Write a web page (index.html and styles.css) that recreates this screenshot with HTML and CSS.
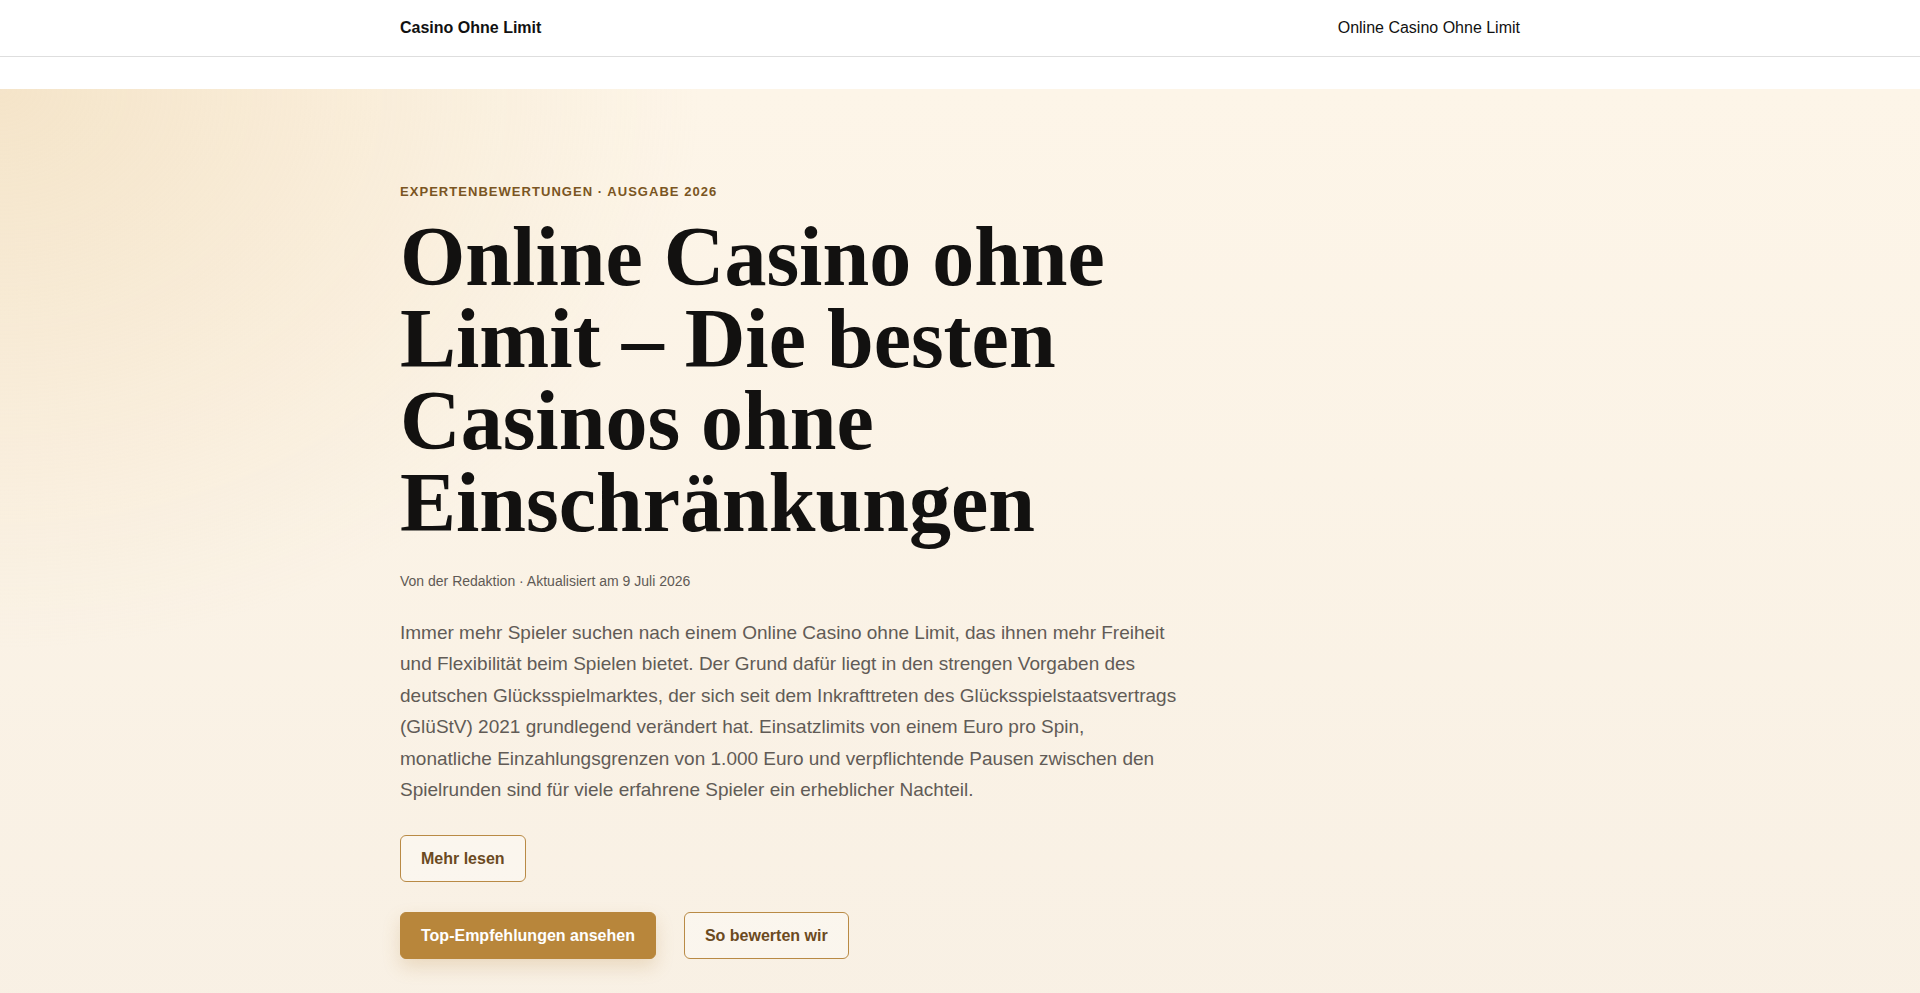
FILE: index.html
```html
<!DOCTYPE html>
<html lang="de">

<head>
    <meta charset="UTF-8">
    <meta name="viewport" content="width=device-width, initial-scale=1.0">
    <title>Online Casino ohne Limit</title>
    <link rel="stylesheet" href="styles.css">
</head>

<body>
    <header class="site-header">
        <div class="wrap header-inner">
            <a class="logo" href="#">Casino Ohne Limit</a>
            <nav class="nav">
                <a href="#">Online Casino Ohne Limit</a>
            </nav>
        </div>
    </header>

    <main>
        <section class="hero">
            <div class="wrap">
                <div class="hero-text">
                    <p class="eyebrow">Expertenbewertungen · Ausgabe 2026</p>
                    <h1>Online Casino ohne Limit – Die besten Casinos ohne Einschränkungen</h1>
                    <p class="meta">Von der Redaktion · Aktualisiert am 9 Juli 2026</p>
                    <p class="lead">Immer mehr Spieler suchen nach einem Online Casino ohne Limit, das ihnen mehr Freiheit
                        und Flexibilität beim Spielen bietet. Der Grund dafür liegt in den strengen Vorgaben des
                        deutschen Glücksspielmarktes, der sich seit dem Inkrafttreten des Glücksspielstaatsvertrags
                        (GlüStV) 2021 grundlegend verändert hat. Einsatzlimits von einem Euro pro Spin,
                        monatliche Einzahlungsgrenzen von 1.000 Euro und verpflichtende Pausen zwischen den
                        Spielrunden sind für viele erfahrene Spieler ein erheblicher Nachteil.</p>
                    <a class="btn btn-outline" href="#">Mehr lesen</a>
                    <div class="actions">
                        <a class="btn btn-gold" href="#">Top-Empfehlungen ansehen</a>
                        <a class="btn btn-outline" href="#">So bewerten wir</a>
                    </div>
                </div>
            </div>
        </section>
    </main>
</body>

</html>
```

FILE: styles.css
```css
html {
    height: 100%;
}

body {
    margin: 0;
    padding: 0;
    font-family: "Liberation Sans", Arial, sans-serif;
    color: #111;
    background: #fff;
}

a {
    text-decoration: none;
    color: inherit;
}

.wrap {
    max-width: 1120px;
    margin: 0 auto;
}

.site-header {
    height: 56px;
    border-bottom: 1px solid #dedede;
    background: #fff;
}

.header-inner {
    height: 100%;
    display: flex;
    align-items: center;
    justify-content: space-between;
}

.logo {
    font-size: 16px;
    font-weight: 700;
    color: #111;
}

.nav a {
    font-size: 16px;
    color: #111;
}

main {
    margin-top: 32px;
}

.hero {
    padding: 95px 0 96px;
    background:
        radial-gradient(ellipse 1000px 800px at 0 0, rgba(238, 215, 176, .55), rgba(238, 215, 176, 0) 70%),
        linear-gradient(180deg, #fdf5e8 0%, #f8f0e4 100%);
}

.hero-text {
    max-width: 790px;
}

.eyebrow {
    margin: 0 0 17px;
    font-size: 13px;
    font-weight: 700;
    letter-spacing: .08em;
    text-transform: uppercase;
    color: #7a5522;
}

.hero h1 {
    margin: 0 0 27px;
    font-family: "Liberation Serif", "Times New Roman", serif;
    font-size: 84px;
    line-height: 82px;
    font-weight: 700;
    color: #121110;
}

.meta {
    margin: 0 0 26px;
    font-size: 14px;
    line-height: 20px;
    color: #5f5a55;
}

.lead {
    max-width: 780px;
    margin: 0 0 30px;
    font-size: 19px;
    line-height: 31.4px;
    color: #615b56;
}

.btn {
    display: inline-block;
    padding: 13px 20px;
    font-size: 16px;
    line-height: 19px;
    font-weight: 700;
    border-radius: 6px;
    border: 1px solid #b98a45;
}

.btn-outline {
    color: #6b4a1f;
    background: rgba(255, 255, 255, .35);
}

.btn-gold {
    color: #fff;
    background: #b8863b;
    border-color: #b8863b;
    box-shadow: 0 8px 18px rgba(184, 134, 59, .22);
}

.actions {
    display: flex;
    gap: 28px;
    margin-top: 30px;
}
```
